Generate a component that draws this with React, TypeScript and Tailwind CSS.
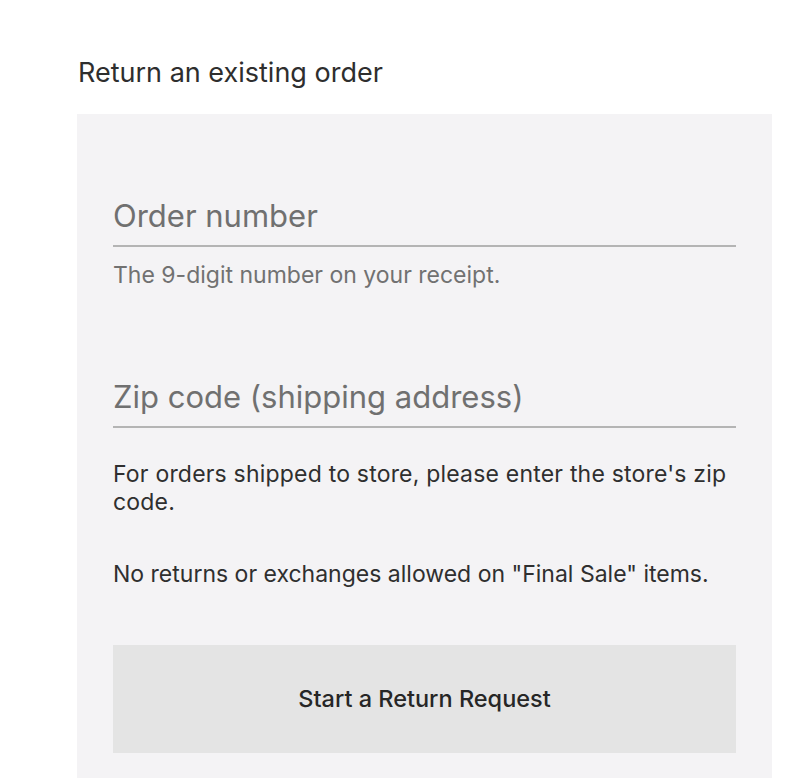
const font = { fontFamily: "Inter, 'Noto Sans', sans-serif" };

function Field({ placeholder }: { placeholder: string }) {
  return (
    <input
      type="text"
      placeholder={placeholder}
      className="block w-full p-0 pb-[9px] bg-transparent border-b-2 border-[#b4b4b4] text-[31px] leading-[40px] text-[#333] placeholder:text-[#707070] outline-none"
    />
  );
}

export default function App() {
  return (
    <div className="min-h-screen bg-white px-[77px] pt-[57px]" style={font}>
      <h2 className="pl-px text-[27px] leading-[32px] text-[#2e2e2e]">
        Return an existing order
      </h2>

      <div className="mt-[25px] bg-[#f4f3f5] px-9 pt-[82px] pb-10 w-[695px]">
        <Field placeholder="Order number" />
        <p className="mt-[14px] text-[23px] leading-[28px] text-[#717171]">
          The 9-digit number on your receipt.
        </p>

        <div className="mt-[88px]">
          <Field placeholder="Zip code (shipping address)" />
        </div>
        <p className="mt-[32px] text-[23px] leading-[28px] tracking-[0.2px] text-[#2f2f2f]">
          For orders shipped to store, please enter the store's zip code.
        </p>
        <p className="mt-[44px] text-[23px] leading-[28px] text-[#2f2f2f]">
          No returns or exchanges allowed on "Final Sale" items.
        </p>

        <button
          type="button"
          className="mt-[57px] flex h-[108px] w-full items-center justify-center bg-[#e4e4e4] text-[23.5px] font-medium text-[#262626]"
        >
          Start a Return Request
        </button>
      </div>
    </div>
  );
}
